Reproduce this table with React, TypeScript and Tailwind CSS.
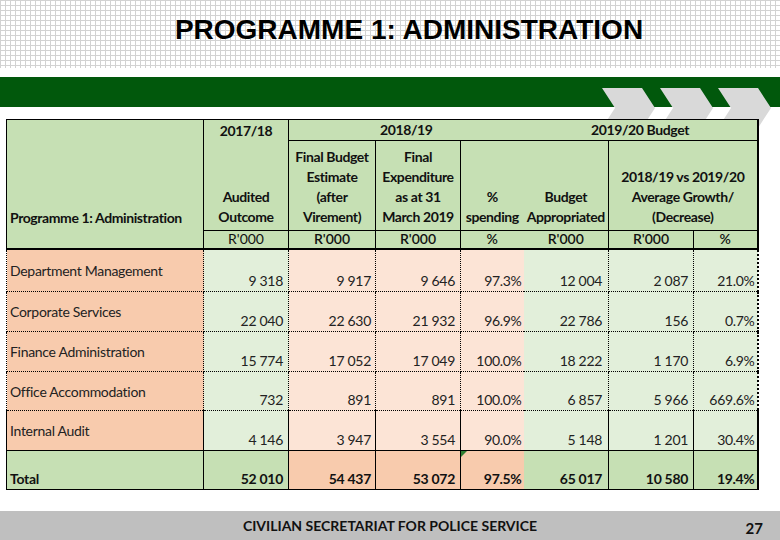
import React from "react";

const rows: string[][] = [
  ["Department Management", "9 318", "9 917", "9 646", "97.3%", "12 004", "2 087", "21.0%"],
  ["Corporate Services", "22 040", "22 630", "21 932", "96.9%", "22 786", "156", "0.7%"],
  ["Finance Administration", "15 774", "17 052", "17 049", "100.0%", "18 222", "1 170", "6.9%"],
  ["Office Accommodation", "732", "891", "891", "100.0%", "6 857", "5 966", "669.6%"],
  ["Internal Audit", "4 146", "3 947", "3 554", "90.0%", "5 148", "1 201", "30.4%"],
];
const total = ["Total", "52 010", "54 437", "53 072", "97.5%", "65 017", "10 580", "19.4%"];
const rowHeights = ["h-[43px]", "h-[40px]", "h-[40px]", "h-[39px]", "h-[40px]"];

const dataBg = [
  "bg-[#f8cbad]",
  "bg-[#e2efda]",
  "bg-[#fce4d6]",
  "bg-[#fce4d6]",
  "bg-[#fce4d6]",
  "bg-[#e2efda]",
  "bg-[#e2efda]",
  "bg-[#e2efda]",
];
const totalBg = [
  "bg-[#c6e0b4]",
  "bg-[#c6e0b4]",
  "bg-[#f8cbad]",
  "bg-[#f8cbad]",
  "bg-[#f8cbad]",
  "bg-[#c6e0b4]",
  "bg-[#c6e0b4]",
  "bg-[#c6e0b4]",
];
const rightBorder = [
  "border-r border-black",
  "border-r border-black",
  "border-r border-black",
  "border-r border-black",
  "",
  "border-r border-black",
  "border-r border-black",
  "border-r-2 border-black",
];
const rightPad = ["pl-[3px]", "pr-[5px]", "pr-[4px]", "pr-[5px]", "pr-[2px]", "pr-[6px]", "pr-[5px]", "pr-[2px]"];

function Chevrons() {
  const xs = [2, 60, 118];
  return (
    <svg className="absolute left-[600px] top-[88px]" width="180" height="40" viewBox="0 0 180 40">
      {xs.map((x) => (
        <polygon
          key={x}
          points={`${x},0 ${x + 40},0 ${x + 53},20 ${x + 40},40 ${x},40 ${x + 13},20`}
          fill="#d9d9d9"
        />
      ))}
    </svg>
  );
}

export default function App() {
  const hdr = "bg-[#c6e0b4] font-bold text-[14px] leading-[20px] text-[#111] tracking-[-0.4px]";
  return (
    <div className="relative w-[780px] h-[540px] overflow-hidden bg-white flex flex-col font-['Lato',sans-serif]">
      <div className="h-[68px] bg-white bg-[linear-gradient(to_right,#d2d2d2_1px,transparent_1px),linear-gradient(to_bottom,#d2d2d2_1px,transparent_1px)] bg-[size:5px_5px] flex justify-center pl-[38px] pt-[16px]">
        <h1 className="font-['Liberation_Sans',Arial,sans-serif] font-bold text-[28px] leading-[28px] text-black tracking-[0px]">
          PROGRAMME 1: ADMINISTRATION
        </h1>
      </div>
      <div className="h-[9px] bg-white" />
      <div className="h-[30px] bg-[#01580c]" />
      <div className="h-[12px]" />
      <Chevrons />
      <div className="relative z-10 pl-[6px]">
        <table className="table-fixed border-collapse w-[751px] text-[#1e1e1e]">
          <colgroup>
            <col className="w-[197px]" />
            <col className="w-[85px]" />
            <col className="w-[87px]" />
            <col className="w-[85px]" />
            <col className="w-[63px]" />
            <col className="w-[85px]" />
            <col className="w-[85px]" />
            <col className="w-[64px]" />
          </colgroup>
          <thead>
            <tr className="h-[21px]">
              <td
                rowSpan={3}
                className={`${hdr} border border-black border-b-2 align-bottom text-left pl-[3px] pb-[20px]`}
              >
                Programme 1: Administration
              </td>
              <td rowSpan={2} className={`${hdr} border-t border-r border-black p-0 align-top text-center`}>
                <div className="h-[110px] flex flex-col justify-between pt-[1px] pb-[3px]">
                  <span>2017/18</span>
                  <span>
                    Audited
                    <br />
                    Outcome
                  </span>
                </div>
              </td>
              <td colSpan={3} className={`${hdr} border-t border-b border-black text-center p-0 align-middle`}>
                2018/19
              </td>
              <td colSpan={3} className={`${hdr} border-t border-b border-r-2 border-black text-center p-0 align-middle`}>
                2019/20 Budget
              </td>
            </tr>
            <tr className="h-[90px]">
              <td className={`${hdr} border-r border-black text-center align-bottom p-0 pb-[3px]`}>
                Final Budget
                <br />
                Estimate
                <br />
                (after
                <br />
                Virement)
              </td>
              <td className={`${hdr} border-r border-black text-center align-bottom p-0 pb-[3px]`}>
                Final
                <br />
                Expenditure
                <br />
                as at 31
                <br />
                March 2019
              </td>
              <td className={`${hdr} text-center align-bottom p-0 pb-[3px]`}>
                %
                <br />
                spending
              </td>
              <td className={`${hdr} border-r border-black text-center align-bottom p-0 pb-[3px]`}>
                Budget
                <br />
                Appropriated
              </td>
              <td colSpan={2} className={`${hdr} border-r-2 border-black text-center align-bottom p-0 pb-[3px]`}>
                2018/19 vs 2019/20
                <br />
                Average Growth/
                <br />
                (Decrease)
              </td>
            </tr>
            <tr className="h-[18px]">
              {["R'000", "R'000", "R'000", "%", "R'000", "R'000", "%"].map((t, i) => (
                <td
                  key={i}
                  className={`bg-[#c6e0b4] text-[14px] leading-[16px] text-[#111] ${
                    i === 0 ? "font-normal" : "font-semibold"
                  } text-center p-0 border-t border-b-2 border-black ${rightBorder[i + 1]}`}
                >
                  {t}
                </td>
              ))}
            </tr>
          </thead>
          <tbody>
            {rows.map((r, ri) => (
              <tr key={ri} className={rowHeights[ri]}>
                {r.map((c, ci) => (
                  <td
                    key={ci}
                    className={`${dataBg[ci]} ${rightBorder[ci]} ${rightPad[ci]} ${
                      ci === 0 ? "border-l border-black" : ""
                    } border-b border-black ${ri === 4 ? "border-solid" : "border-dotted"} py-0 text-[14px] text-[#222] tracking-[-0.3px] ${
                      ci === 0
                        ? "text-left align-middle pt-[1px] leading-[18px]"
                        : "text-right align-bottom pb-[1px] leading-[18px] font-normal"
                    }`}
                  >
                    {c}
                  </td>
                ))}
              </tr>
            ))}
            <tr className="h-[39px]">
              {total.map((c, ci) => (
                <td
                  key={ci}
                  className={`${totalBg[ci]} ${rightBorder[ci]} ${rightPad[ci]} ${
                    ci === 0 ? "border-l border-black" : ""
                  } border-b border-black pt-0 text-[14px] font-bold text-[#111] tracking-[-0.3px] leading-[18px] align-bottom pb-[1px] ${
                    ci === 0 ? "text-left" : "text-right"
                  } ${ci === 4 ? "relative" : ""}`}
                >
                  {ci === 4 && (
                    <span className="absolute left-0 top-0 w-0 h-0 border-t-[6px] border-r-[6px] border-t-[#2e7d32] border-r-transparent" />
                  )}
                  {c}
                </td>
              ))}
            </tr>
          </tbody>
        </table>
      </div>
      <div className="flex-1" />
      <div className="h-[29px] bg-[#bfbfbf] flex items-center relative">
        <div className="flex-1 text-center font-bold text-[14px] text-[#111]">
          CIVILIAN SECRETARIAT FOR POLICE SERVICE
        </div>
        <div className="absolute right-[17px] top-[6px] font-bold text-[15px] text-[#111]">27</div>
      </div>
    </div>
  );
}
